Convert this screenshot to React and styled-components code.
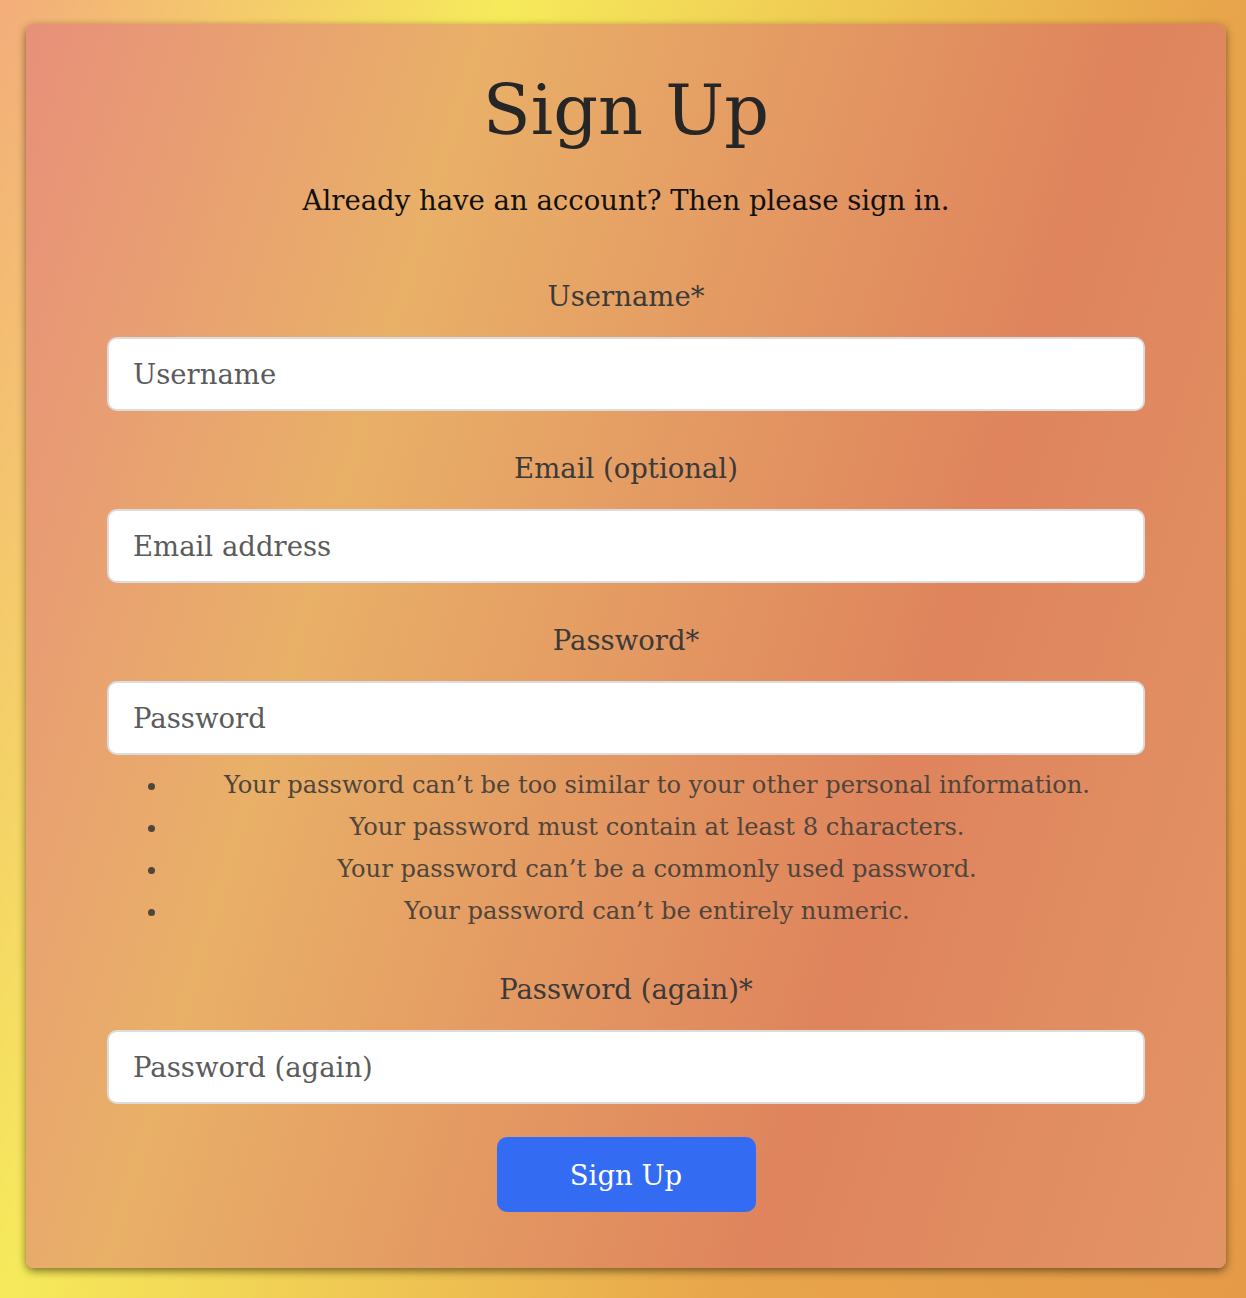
import React from "react";
import styled, { createGlobalStyle } from "styled-components";

const GlobalStyle = createGlobalStyle`
  html, body {
    margin: 0;
    padding: 0;
  }
  body {
    font-family: "DejaVu Serif", "Liberation Serif", serif;
  }
  *, *::before, *::after {
    box-sizing: border-box;
  }
`;

const Page = styled.div`
  min-height: 100vh;
  padding: 24px 20px 30px 26px;
  background: linear-gradient(
    111deg,
    #f3ad7b 0%,
    #f6ea5b 29%,
    #e8a54b 70%,
    #e59a48 100%
  );
`;

const Card = styled.main`
  width: 1200px;
  padding: 44px 81px 56px;
  border-radius: 8px;
  background: linear-gradient(
    107deg,
    #e8907a 0%,
    #e9b068 29%,
    #df845d 70%,
    #e39466 100%
  );
  box-shadow: 0 3px 8px rgba(40, 30, 0, 0.6);
  text-align: center;
`;

const Title = styled.h1`
  margin: 0;
  font-size: 70px;
  line-height: 84px;
  font-weight: 400;
  color: #262626;
`;

const Subtitle = styled.p`
  margin: 28px 0 0;
  font-size: 27.5px;
  line-height: 40px;
  color: #111;
`;

const Form = styled.form`
  margin-top: 56px;
  display: flex;
  flex-direction: column;
  align-items: center;
`;

const Field = styled.div`
  width: 100%;
  margin-bottom: 37px;
`;

const Label = styled.label`
  display: block;
  font-size: 27.5px;
  line-height: 40px;
  color: #3a3a3a;
  margin-bottom: 21px;
`;

const Input = styled.input`
  display: block;
  width: 100%;
  height: 74px;
  padding: 0 24px;
  border: 2px solid #dcdcdc;
  border-radius: 10px;
  background: #fff;
  font-family: inherit;
  font-size: 27.5px;
  color: #333;
  outline: none;

  &::placeholder {
    color: #5b5b5b;
  }
`;

const HelpList = styled.ul`
  margin: 9px 0 0;
  padding-left: 62px;
  list-style: disc;
  color: #4e453c;
  font-size: 24.2px;
  line-height: 42px;
`;

const HelpItem = styled.li`
  text-align: center;
`;

const SubmitButton = styled.button`
  margin-top: -4px;
  width: 259px;
  height: 75px;
  border: none;
  border-radius: 10px;
  background: #336cf3;
  color: #fff;
  font-family: inherit;
  font-size: 27.5px;
  cursor: pointer;
`;

const helpTexts = [
  "Your password can’t be too similar to your other personal information.",
  "Your password must contain at least 8 characters.",
  "Your password can’t be a commonly used password.",
  "Your password can’t be entirely numeric.",
];

export default function App() {
  return (
    <>
      <GlobalStyle />
      <Page>
        <Card>
          <Title>Sign Up</Title>
          <Subtitle>Already have an account? Then please sign in.</Subtitle>
          <Form onSubmit={(e) => e.preventDefault()}>
            <Field>
              <Label htmlFor="username">Username*</Label>
              <Input id="username" placeholder="Username" />
            </Field>
            <Field>
              <Label htmlFor="email">Email (optional)</Label>
              <Input id="email" placeholder="Email address" />
            </Field>
            <Field>
              <Label htmlFor="password1">Password*</Label>
              <Input id="password1" type="password" placeholder="Password" />
              <HelpList>
                {helpTexts.map((t) => (
                  <HelpItem key={t}>{t}</HelpItem>
                ))}
              </HelpList>
            </Field>
            <Field>
              <Label htmlFor="password2">Password (again)*</Label>
              <Input
                id="password2"
                type="password"
                placeholder="Password (again)"
              />
            </Field>
            <SubmitButton type="submit">Sign Up</SubmitButton>
          </Form>
        </Card>
      </Page>
    </>
  );
}
